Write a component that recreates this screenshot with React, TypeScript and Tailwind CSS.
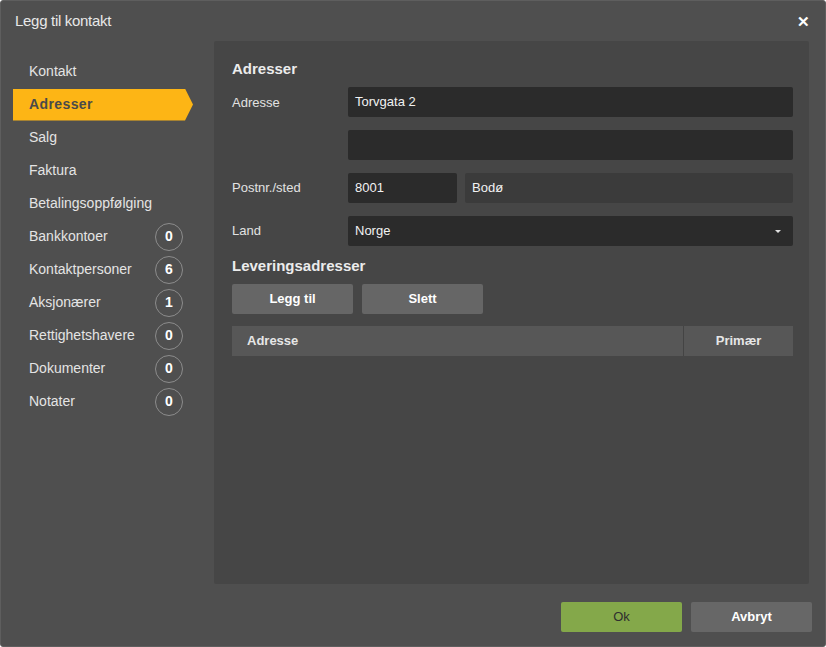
const navItems: { label: string; count?: number }[] = [
  { label: "Kontakt" },
  { label: "Adresser" },
  { label: "Salg" },
  { label: "Faktura" },
  { label: "Betalingsoppfølging" },
  { label: "Bankkontoer", count: 0 },
  { label: "Kontaktpersoner", count: 6 },
  { label: "Aksjonærer", count: 1 },
  { label: "Rettighetshavere", count: 0 },
  { label: "Dokumenter", count: 0 },
  { label: "Notater", count: 0 },
];

function Field({ value, className = "" }: { value?: string; className?: string }) {
  return (
    <div
      className={`h-[30px] rounded-[2px] bg-[#2b2b2b] px-[7px] flex items-center text-[13px] text-[#f2f2f2] ${className}`}
    >
      {value}
    </div>
  );
}

export default function App() {
  const active = "Adresser";

  return (
    <div className="w-[826px] h-[647px] bg-[#4f4f4f] border border-[#5e5e5e] rounded-[3px] flex flex-col font-['Liberation_Sans',Arial,sans-serif] text-[#e6e6e6]">
      {/* title bar */}
      <div className="h-[40px] flex items-center justify-between pl-[14px] pr-[15px]">
        <span className="text-[15px] text-[#e8e8e8] tracking-[-0.3px]">Legg til kontakt</span>
        <span className="text-[15px] font-bold text-white leading-none">✕</span>
      </div>

      <div className="flex flex-1 min-h-0">
        {/* side nav */}
        <nav className="w-[213px] pt-[14px] pl-[12px] flex flex-col">
          {navItems.map((item) => {
            const isActive = item.label === active;
            return (
              <div key={item.label} className="h-[33px] flex items-center">
                <div
                  className={`relative w-[180px] h-[32px] flex items-center pl-[16px] text-[14px] ${
                    isActive
                      ? "bg-[#fdb515] font-bold text-[#4a4a4a] tracking-[0.4px] [clip-path:polygon(0_0,calc(100%-8px)_0,100%_50%,calc(100%-8px)_100%,0_100%)]"
                      : "text-[#e4e4e4]"
                  }`}
                >
                  {item.label}
                  {item.count !== undefined && (
                    <span className="absolute left-[142px] top-[2px] w-[28px] h-[28px] rounded-full border border-[#8c8c8c] flex items-center justify-center text-[14px] font-bold text-white">
                      {item.count}
                    </span>
                  )}
                </div>
              </div>
            );
          })}
        </nav>

        <div className="flex-1 flex flex-col pr-[16px]">
          {/* main panel */}
          <section className="h-[543px] bg-[#464646] rounded-[2px] pl-[18px] pr-[16px] pt-[18px]">
            <h2 className="text-[15px] font-bold text-[#ececec] leading-[20px]">Adresser</h2>

            <div className="mt-[8px] grid grid-cols-[116px_1fr] gap-y-[13px] items-center text-[13px] text-[#e2e2e2]">
              <span className="self-start pt-[6px]">Adresse</span>
              <Field value="Torvgata 2" />
              <span />
              <Field />
              <span>Postnr./sted</span>
              <div className="flex gap-[8px]">
                <Field value="8001" className="w-[109px]" />
                <Field value="Bodø" className="flex-1 bg-[#3b3b3b]" />
              </div>
              <span>Land</span>
              <div className="h-[30px] rounded-[2px] bg-[#2b2b2b] px-[7px] flex items-center justify-between text-[13px] text-[#f2f2f2]">
                Norge
                <span className="w-0 h-0 border-l-[3px] border-r-[3px] border-t-[3px] border-l-transparent border-r-transparent border-t-[#e0e0e0] mr-[5px]" />
              </div>
            </div>

            <h2 className="mt-[10px] text-[15px] font-bold text-[#ececec] leading-[20px]">Leveringsadresser</h2>

            <div className="mt-[8px] flex gap-[9px]">
              <button className="w-[121px] h-[30px] rounded-[2px] bg-[#666666] text-[13px] font-bold text-white">
                Legg til
              </button>
              <button className="w-[121px] h-[30px] rounded-[2px] bg-[#666666] text-[13px] font-bold text-white">
                Slett
              </button>
            </div>

            <div className="mt-[12px] h-[30px] flex bg-[#575757] text-[13px] font-bold text-[#e6e6e6]">
              <div className="flex-1 flex items-center pl-[15px] border-r border-[#444444]">Adresse</div>
              <div className="w-[109px] flex items-center justify-center">Primær</div>
            </div>
          </section>

          {/* footer */}
          <div className="flex-1 flex items-start justify-end gap-[9px] pt-[18px] mr-[-3px]">
            <button className="w-[121px] h-[30px] rounded-[2px] bg-[#84a84a] text-[13px] text-[#2f2f2f]">Ok</button>
            <button className="w-[121px] h-[30px] rounded-[2px] bg-[#676767] text-[13px] font-bold text-white">
              Avbryt
            </button>
          </div>
        </div>
      </div>
    </div>
  );
}
